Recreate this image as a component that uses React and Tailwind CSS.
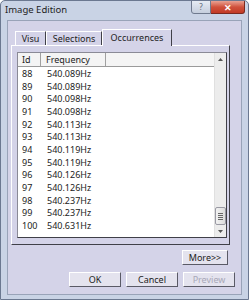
import React from "react";

const rows = [
  ["88", "540.089Hz"],
  ["89", "540.089Hz"],
  ["90", "540.098Hz"],
  ["91", "540.098Hz"],
  ["92", "540.113Hz"],
  ["93", "540.113Hz"],
  ["94", "540.119Hz"],
  ["95", "540.119Hz"],
  ["96", "540.126Hz"],
  ["97", "540.126Hz"],
  ["98", "540.237Hz"],
  ["99", "540.237Hz"],
  ["100", "540.631Hz"],
];

function Btn({ children, w, disabled }) {
  return (
    <div
      className={`h-[15px] ${w} flex items-center justify-center bg-[#e4e3ee] border border-t-white border-l-white border-r-[#5a5a66] border-b-[#5a5a66] text-[9px] leading-none ${
        disabled ? "text-[#a8a8b8]" : "text-[#222]"
      }`}
    >
      {children}
    </div>
  );
}

export default function App() {
  return (
    <div className="w-[249px] h-[300px] flex flex-col bg-[#c9d3e5] border border-[#6b7890] rounded-t-[5px] font-['Noto_Sans',sans-serif] text-[#222] overflow-hidden">
      {/* title bar */}
      <div className="h-[19px] flex items-start justify-between pl-[4px] pr-[3px]">
        <div className="pt-[3px] text-[9.5px] leading-[12px] text-[#1e1e1e]">Image Edition</div>
        <div className="flex -mt-[1px]">
          <div className="w-[20px] h-[14px] flex items-center justify-center border border-[#6f7a8e] rounded-bl-[3px] bg-gradient-to-b from-[#e6ebf3] to-[#c5cedd] text-[8px] text-[#5d6676] leading-none">
            ?
          </div>
          <div className="w-[34px] h-[14px] flex items-center justify-center border border-l-0 border-[#7a2a20] rounded-br-[3px] bg-gradient-to-b from-[#e8a193] via-[#d0513c] to-[#c23a25] text-[9px] font-bold text-white leading-none">
            ✕
          </div>
        </div>
      </div>
      {/* client */}
      <div className="flex-1 mx-[6px] mb-[4px] bg-[#d4d3e8] border border-[#99a3b8] flex flex-col">
        {/* tabs */}
        <div className="flex items-end mt-[7px] ml-[7px] h-[17px]">
          <div className="h-[14px] w-[31px] flex items-center justify-center border-t border-l border-white border-r border-r-[#404048] text-[9px] leading-none">
            Visu
          </div>
          <div className="h-[14px] w-[56px] flex items-center justify-center border-t border-l border-white border-r border-r-[#404048] text-[9px] leading-none">
            Selections
          </div>
          <div className="h-[17px] w-[70px] flex items-center justify-center border-t border-l border-white border-r border-r-[#404048] text-[9px] leading-none pb-[1px] relative z-10 bg-[#d4d3e8] -mb-[1px]">
            Occurrences
          </div>
        </div>
        {/* panel */}
        <div className="ml-[3px] w-[219px] h-[200px] border-t border-l border-white border-r border-b border-r-[#404048] border-b-[#404048] pt-[6px] pl-[5px] pr-[2px] pb-[6px] flex">
          <div className="flex-1 border border-t-[#8a8a96] border-l-[#8a8a96] border-r-[#404048] border-b-[#404048] bg-white flex">
            <div className="flex-1 flex flex-col">
              <div className="h-[14px] flex bg-[#f4f4f4] border-b border-[#9a9a9a] text-[9px] leading-none">
                <div className="w-[23px] border-r border-[#a0a0a0] flex items-center pl-[4px]">Id</div>
                <div className="w-[65px] border-r border-[#a0a0a0] flex items-center pl-[5px]">Frequency</div>
                <div className="flex-1" />
              </div>
              <div className="flex flex-col">
                {rows.map(([id, f]) => (
                  <div key={id} className="h-[12.7px] flex items-center text-[9px] leading-none">
                    <div className="w-[23px] pl-[4px]">{id}</div>
                    <div className="pl-[6px]">{f}</div>
                  </div>
                ))}
              </div>
            </div>
            {/* scrollbar */}
            <div className="w-[12px] bg-[#ececec] border-l border-[#e0e0e0] flex flex-col items-center">
              <div className="h-[12px] flex items-center justify-center">
                <svg width="5" height="3" viewBox="0 0 5 3"><path d="M0 3L2.5 0L5 3Z" fill="#555" /></svg>
              </div>
              <div className="flex-1 w-full" />
              <div className="w-[11px] h-[18px] border border-[#9a9aa4] rounded-[2px] bg-gradient-to-r from-[#f2f2f2] to-[#dcdcdc] flex flex-col items-center justify-center gap-[1px]">
                <div className="w-[5px] h-px bg-[#666]" />
                <div className="w-[5px] h-px bg-[#666]" />
                <div className="w-[5px] h-px bg-[#666]" />
                <div className="w-[5px] h-px bg-[#666]" />
              </div>
              <div className="h-[12px] flex items-center justify-center">
                <svg width="5" height="3" viewBox="0 0 5 3"><path d="M0 0L2.5 3L5 0Z" fill="#555" /></svg>
              </div>
            </div>
          </div>
        </div>
        {/* more */}
        <div className="flex justify-end mt-[5px] pr-[13px]">
          <Btn w="w-[46px]">More&gt;&gt;</Btn>
        </div>
        <div className="flex justify-end gap-[5px] mt-[7px] pr-[6px]">
          <Btn w="w-[52px]">OK</Btn>
          <Btn w="w-[52px]">Cancel</Btn>
          <Btn w="w-[52px]" disabled>Preview</Btn>
        </div>
      </div>
    </div>
  );
}
